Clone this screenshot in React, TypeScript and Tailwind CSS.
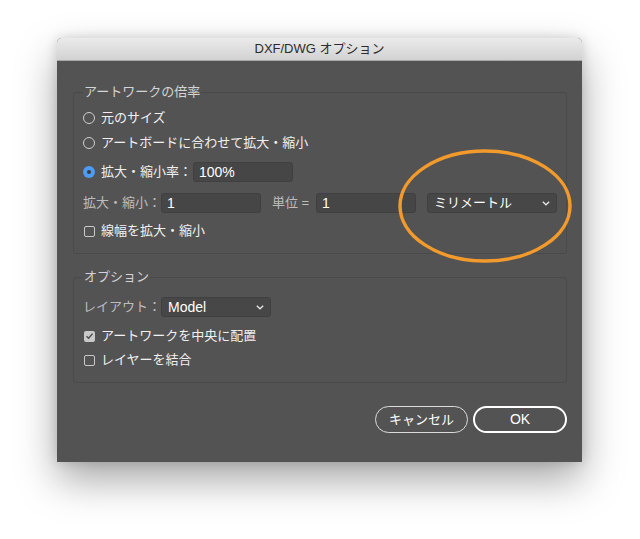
const font = { fontFamily: '"Liberation Sans", "Noto Sans CJK JP", sans-serif' };

function Radio({ checked }: { checked?: boolean }) {
  if (checked) {
    return (
      <span className="flex h-[12px] w-[12px] shrink-0 items-center justify-center rounded-full bg-[#4f9bf0]">
        <span className="h-[4px] w-[4px] rounded-full bg-[#3a3a3a]" />
      </span>
    );
  }
  return <span className="h-[12px] w-[12px] shrink-0 rounded-full border border-[#cfcfcf]" />;
}

function Checkbox({ checked }: { checked?: boolean }) {
  if (checked) {
    return (
      <span className="flex h-[11px] w-[11px] shrink-0 items-center justify-center rounded-[2px] bg-[#c9c9c9]">
        <svg width="9" height="8" viewBox="0 0 9 8">
          <path d="M1.5 4.2 L3.6 6.2 L7.6 1.6" fill="none" stroke="#4a4a4a" strokeWidth="1.4" />
        </svg>
      </span>
    );
  }
  return <span className="h-[11px] w-[11px] shrink-0 rounded-[2px] border border-[#c9c9c9]" />;
}

function Chevron() {
  return (
    <svg width="8" height="5" viewBox="0 0 8 5">
      <path d="M0.8 0.8 L4 3.8 L7.2 0.8" fill="none" stroke="#e6e6e6" strokeWidth="1.3" />
    </svg>
  );
}

function Field({ value, className }: { value: string; className: string }) {
  return (
    <div
      className={`flex h-[20px] shrink-0 items-center rounded-[3px] border border-[#404040] bg-[#464646] pl-[5px] text-[14px] text-white ${className}`}
    >
      {value}
    </div>
  );
}

function Select({ value, className }: { value: string; className: string }) {
  return (
    <div
      className={`flex h-[20px] shrink-0 items-center justify-between rounded-[3px] border border-[#404040] bg-[#474747] pl-[6px] pr-[6px] text-white ${className}`}
    >
      <span>{value}</span>
      <Chevron />
    </div>
  );
}

export default function App() {
  return (
    <div className="min-h-[539px] w-[640px] bg-white pl-[57px] pt-[38px]" style={font}>
      <div className="relative w-[525px] overflow-hidden rounded-t-[5px] bg-[#535353] shadow-[0_18px_40px_rgba(0,0,0,0.35),0_0_12px_rgba(0,0,0,0.15)]">
        <div className="flex h-[23px] items-center justify-center border-b border-[#a8a8a8] bg-gradient-to-b from-[#ebebeb] to-[#d2d2d2] text-[13px] text-[#2c2c2c]">
          DXF/DWG オプション
        </div>

        <div className="pb-[29px] pl-[16px] pr-[15px] pt-[23px] whitespace-nowrap">
          <fieldset className="rounded-[3px] border border-[#4a4a4a] pb-[12px] pl-[9px]">
            <legend className="h-[16px] px-[1px] text-[13px] leading-[16px] text-[#d4d4d4]">アートワークの倍率</legend>
            <div className="mt-[8px] flex h-[20px] items-center gap-[6px] text-[13px] text-[#f0f0f0]">
              <Radio />
              <span>元のサイズ</span>
            </div>
            <div className="mt-[5px] flex h-[20px] items-center gap-[6px] text-[13px] text-[#f0f0f0]">
              <Radio />
              <span>アートボードに合わせて拡大・縮小</span>
            </div>
            <div className="mt-[9px] flex h-[20px] items-center gap-[6px] text-[13px] text-[#f0f0f0]">
              <Radio checked />
              <span className="w-[86px] shrink-0">拡大・縮小率：</span>
              <Field value="100%" className="w-[100px]" />
            </div>
            <div className="mt-[11px] flex h-[20px] items-center text-[13px] text-[#bdbdbd]">
              <span className="w-[78px] shrink-0">拡大・縮小：</span>
              <Field value="1" className="w-[100px]" />
              <span className="ml-[11px] w-[44px] shrink-0">単位 =</span>
              <Field value="1" className="w-[100px]" />
              <Select value="ミリメートル" className="ml-[11px] w-[130px] text-[13px]" />
            </div>
            <div className="mt-[8px] flex h-[20px] items-center gap-[6px] pl-[1px] text-[13px] text-[#f0f0f0]">
              <Checkbox />
              <span>線幅を拡大・縮小</span>
            </div>
          </fieldset>

          <fieldset className="mt-[15px] rounded-[3px] border border-[#4a4a4a] pb-[12px] pl-[9px]">
            <legend className="h-[16px] px-[1px] text-[13px] leading-[16px] text-[#d4d4d4]">オプション</legend>
            <div className="mt-[12px] flex h-[20px] items-center text-[13px] text-[#bdbdbd]">
              <span className="w-[78px] shrink-0">レイアウト：</span>
              <Select value="Model" className="w-[110px] text-[14px]" />
            </div>
            <div className="mt-[9px] flex h-[20px] items-center gap-[6px] pl-[1px] text-[13px] text-[#f0f0f0]">
              <Checkbox checked />
              <span>アートワークを中央に配置</span>
            </div>
            <div className="mt-[4px] flex h-[20px] items-center gap-[6px] pl-[1px] text-[13px] text-[#f0f0f0]">
              <Checkbox />
              <span>レイヤーを結合</span>
            </div>
          </fieldset>

          <div className="mt-[23px] flex justify-end gap-[5px]">
            <button className="flex h-[27px] w-[93px] items-center justify-center rounded-full border-[1.5px] border-[#dcdcdc] text-[13px] text-white">
              キャンセル
            </button>
            <button className="flex h-[27px] w-[94px] items-center justify-center rounded-full border-2 border-white text-[14px] text-white">
              OK
            </button>
          </div>
        </div>

        <svg className="absolute left-[341px] top-[110px]" width="174" height="116" viewBox="0 0 174 116">
          <ellipse cx="87" cy="58" rx="85" ry="55" fill="none" stroke="#f29a2c" strokeWidth="3.5" />
        </svg>
      </div>
    </div>
  );
}
